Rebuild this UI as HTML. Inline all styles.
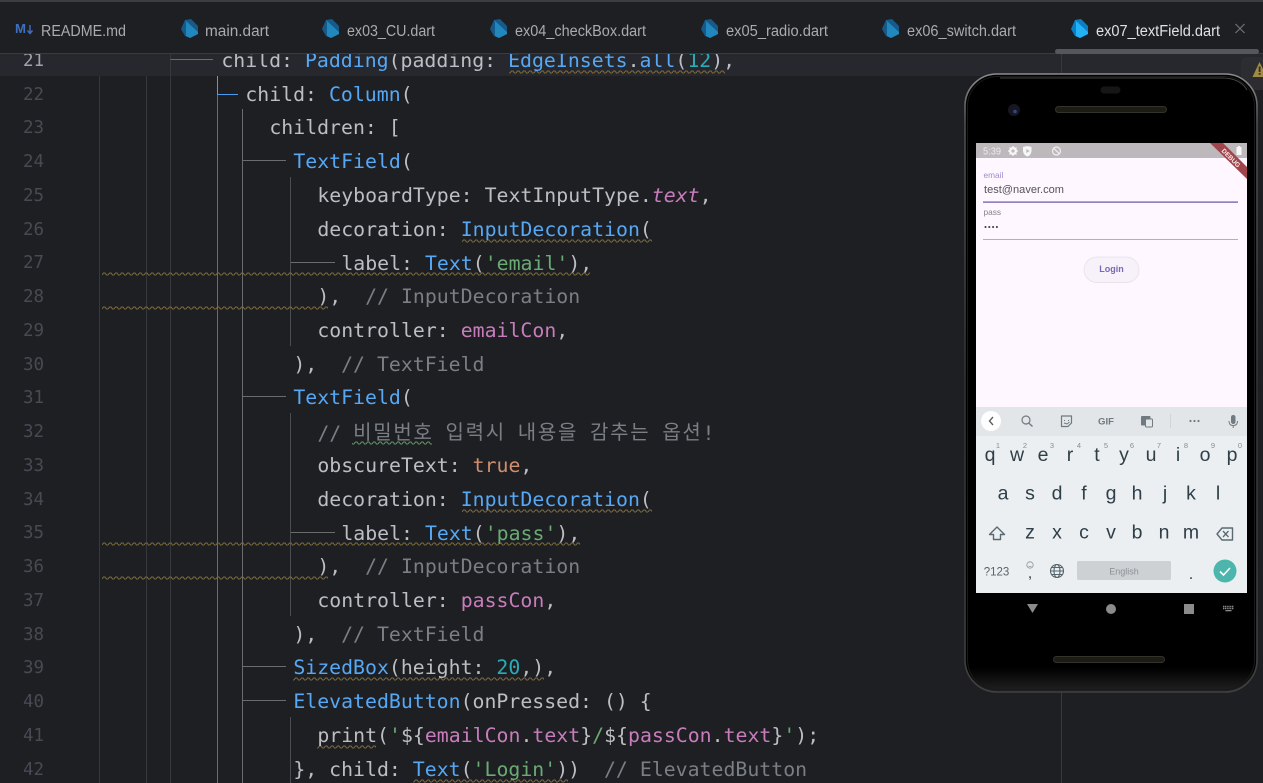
<!DOCTYPE html>
<html><head><meta charset="utf-8"><style>
html,body{margin:0;padding:0;width:1263px;height:783px;overflow:hidden;background:#1e1f23}
#wrap{position:relative;width:1263px;height:783px;overflow:hidden;background:#1e1f23}
svg{position:absolute;left:0;top:0}
.l{position:absolute;height:34px;line-height:34px;white-space:pre;margin-left:-.7px;font-family:"DejaVu Sans Mono","Liberation Mono","Noto Sans CJK KR",monospace;font-size:19.85px;color:#bcbec4;top:calc(43.8px + var(--n)*33.76px);z-index:3}
.g{position:absolute;left:23px;height:34px;line-height:34px;font-family:"DejaVu Sans Mono","Liberation Mono",monospace;font-size:17.5px;color:#464a52;top:calc(43.8px + var(--n)*33.76px);z-index:3}
.c{color:#56a8f5}.n{color:#2aacb8}.s{color:#6aab73}.p{color:#c77dbb}.k{color:#cf8e6d}.m{color:#7a7e85}
.i{font-style:italic}
.ko{font-family:"Noto Sans CJK KR","Liberation Sans",sans-serif;font-size:20px;letter-spacing:1.7px;position:relative;top:-1.5px}
#phone{filter:blur(.3px)}
</style></head><body><div id="wrap">

<div style="position:absolute;left:0;top:53px;width:1263px;height:23px;background:#26282e"></div>

<svg width="1263" height="783" style="z-index:1">
<defs><pattern id="w" width="6" height="4" patternUnits="userSpaceOnUse"><path d="M0 3 L1.5 1 L3 1 L4.5 3 L6 3" fill="none" stroke="#7d6c3e" stroke-width="1"/></pattern>
<pattern id="wg" width="6" height="4" patternUnits="userSpaceOnUse"><path d="M0 3 L1.5 1 L3 1 L4.5 3 L6 3" fill="none" stroke="#5f9a62" stroke-width="1"/></pattern></defs>
<g stroke="#36383d" stroke-width="1" fill="none">
<path d="M99.5 76V783M146.5 76V783M170.5 53V783M1061.5 53V783"/>
</g>
<g stroke="#6a6c70" stroke-width="1" fill="none">
<path d="M170.5 59.5H213"/>
<path d="M217.5 94V783M242.5 109V783"/>
<path d="M242.5 160.5H286M242.5 396.5H286M242.5 666.5H286M242.5 700.5H286"/>
<path d="M290.5 262.5H335M290.5 532.5H335"/>
</g>
<path d="M217.5 76V94.5H238" stroke="#4a9cf0" fill="none"/>
<path d="M290.5 177V346M290.5 413V616M290.5 717V783" stroke="#4a4c52" fill="none"/>
<g transform="translate(0,70)"><rect x="509" width="216" height="4" fill="url(#w)"/></g>
<g transform="translate(0,239)"><rect x="462" width="190" height="4" fill="url(#w)"/></g>
<g transform="translate(0,272)"><rect x="102" width="488" height="4" fill="url(#w)"/></g>
<g transform="translate(0,306)"><rect x="102" width="226" height="4" fill="url(#w)"/></g>
<g transform="translate(0,441)"><rect x="352" width="80" height="4" fill="url(#wg)"/></g>
<g transform="translate(0,509)"><rect x="462" width="190" height="4" fill="url(#w)"/></g>
<g transform="translate(0,542)"><rect x="102" width="478" height="4" fill="url(#w)"/></g>
<g transform="translate(0,576)"><rect x="102" width="226" height="4" fill="url(#w)"/></g>
<g transform="translate(0,677)"><rect x="293" width="251" height="4" fill="url(#w)"/></g>
<g transform="translate(0,745)"><rect x="317" width="59" height="4" fill="url(#w)"/></g>
<g transform="translate(0,779)"><rect x="413" width="155" height="4" fill="url(#w)"/></g>
</svg>

<div class="g" style="--n:0;color:#a1a3ab">21</div><div class="g" style="--n:1">22</div><div class="g" style="--n:2">23</div><div class="g" style="--n:3">24</div><div class="g" style="--n:4">25</div><div class="g" style="--n:5">26</div><div class="g" style="--n:6">27</div><div class="g" style="--n:7">28</div><div class="g" style="--n:8">29</div><div class="g" style="--n:9">30</div><div class="g" style="--n:10">31</div><div class="g" style="--n:11">32</div><div class="g" style="--n:12">33</div><div class="g" style="--n:13">34</div><div class="g" style="--n:14">35</div><div class="g" style="--n:15">36</div><div class="g" style="--n:16">37</div><div class="g" style="--n:17">38</div><div class="g" style="--n:18">39</div><div class="g" style="--n:19">40</div><div class="g" style="--n:20">41</div><div class="g" style="--n:21">42</div>

<div class="l" style="--n:0;left:222px">child: <span class="c">Padding</span>(padding: <span class="c">EdgeInsets</span>.<span class="c">all</span>(<span class="n">12</span>),</div>
<div class="l" style="--n:1;left:246px">child: <span class="c">Column</span>(</div>
<div class="l" style="--n:2;left:270px">children: [</div>
<div class="l" style="--n:3;left:294px"><span class="c">TextField</span>(</div>
<div class="l" style="--n:4;left:318px">keyboardType: TextInputType.<span class="p i">text</span>,</div>
<div class="l" style="--n:5;left:318px">decoration: <span class="c">InputDecoration</span>(</div>
<div class="l" style="--n:6;left:342px;margin-top:.6px">label: <span class="c">Text</span>(<span class="s">'email'</span>),</div>
<div class="l" style="--n:7;left:318px">),  <span class="m">// InputDecoration</span></div>
<div class="l" style="--n:8;left:318px">controller: <span class="p">emailCon</span>,</div>
<div class="l" style="--n:9;left:294px">),  <span class="m">// TextField</span></div>
<div class="l" style="--n:10;left:294px"><span class="c">TextField</span>(</div>
<div class="l m" style="--n:11;left:318px">// <span class="ko">비밀번호</span> <span class="ko">입력시</span> <span class="ko">내용을</span> <span class="ko">감추는</span> <span class="ko">옵션</span>!</div>
<div class="l" style="--n:12;left:318px">obscureText: <span class="k">true</span>,</div>
<div class="l" style="--n:13;left:318px">decoration: <span class="c">InputDecoration</span>(</div>
<div class="l" style="--n:14;left:342px;margin-top:.6px">label: <span class="c">Text</span>(<span class="s">'pass'</span>),</div>
<div class="l" style="--n:15;left:318px">),  <span class="m">// InputDecoration</span></div>
<div class="l" style="--n:16;left:318px">controller: <span class="p">passCon</span>,</div>
<div class="l" style="--n:17;left:294px">),  <span class="m">// TextField</span></div>
<div class="l" style="--n:18;left:294px"><span class="c">SizedBox</span>(height: <span class="n">20</span>,),</div>
<div class="l" style="--n:19;left:294px"><span class="c">ElevatedButton</span>(onPressed: () {</div>
<div class="l" style="--n:20;left:318px">print(<span class="s">'</span>${<span class="p">emailCon</span>.<span class="p">text</span>}<span class="s">/</span>${<span class="p">passCon</span>.<span class="p">text</span>}<span class="s">'</span>);</div>
<div class="l" style="--n:21;left:294px">}, child: <span class="c">Text</span>(<span class="s">'Login'</span>))  <span class="m">// ElevatedButton</span></div>

<svg width="1263" height="783" style="z-index:5" font-family="'Liberation Sans',sans-serif">
<defs>
<linearGradient id="fr" x1="0" y1="0" x2="0" y2="1"><stop offset="0" stop-color="#8e8e8e"/><stop offset=".08" stop-color="#4e4e4e"/><stop offset=".5" stop-color="#333"/><stop offset="1" stop-color="#404040"/></linearGradient>
<linearGradient id="bt" x1="0" y1="0" x2="0" y2="1"><stop offset="0" stop-color="#000"/><stop offset=".96" stop-color="#000"/><stop offset="1" stop-color="#222"/></linearGradient>
<symbol id="dd" viewBox="0 0 18 19"><polygon points="4,1 10,0 17,7 17,15 9,19 4,17 0,10" fill="#155a8a"/><polygon points="4,1 17,13 17,15 9,19 5,17 5,3" fill="#2187bd"/></symbol>
<symbol id="da" viewBox="0 0 18 19"><polygon points="4,1 10,0 17,7 17,15 9,19 4,17 0,10" fill="#0a7fc4"/><polygon points="4,1 17,13 17,15 9,19 5,17 5,3" fill="#23b2f6"/></symbol>
</defs>

<!-- tab bar -->
<rect x="0" y="0" width="1263" height="53" fill="#1e1f23"/>
<rect x="0" y="0" width="1263" height="2" fill="#3c3d41"/>
<rect x="0" y="53" width="1263" height="1" fill="#393b40"/>
<rect x="1055" y="49" width="204" height="5" rx="2.5" fill="#55575c"/>
<text x="15" y="33" font-size="12.5" font-weight="bold" fill="#3f6fbf" textLength="11" lengthAdjust="spacingAndGlyphs">M</text>
<path d="M30 25V33M27.5 30.5L30 33.5L32.5 30.5" stroke="#3f6fbf" stroke-width="1.4" fill="none"/>
<g font-size="15.5" fill="#a9abb1">
<text x="41" y="36" textLength="85" lengthAdjust="spacingAndGlyphs">README.md</text>
<text x="205" y="36" textLength="64" lengthAdjust="spacingAndGlyphs">main.dart</text>
<text x="347" y="36" textLength="88" lengthAdjust="spacingAndGlyphs">ex03_CU.dart</text>
<text x="515" y="36" textLength="131" lengthAdjust="spacingAndGlyphs">ex04_checkBox.dart</text>
<text x="726" y="36" textLength="102" lengthAdjust="spacingAndGlyphs">ex05_radio.dart</text>
<text x="907" y="36" textLength="109" lengthAdjust="spacingAndGlyphs">ex06_switch.dart</text>
<text x="1096" y="36" textLength="124" lengthAdjust="spacingAndGlyphs" fill="#dfe1e5">ex07_textField.dart</text>
</g>
<use href="#dd" x="181" y="19" width="18" height="19"/>
<use href="#dd" x="322" y="19" width="18" height="19"/>
<use href="#dd" x="490" y="19" width="18" height="19"/>
<use href="#dd" x="701" y="19" width="18" height="19"/>
<use href="#dd" x="882" y="19" width="18" height="19"/>
<use href="#da" x="1071" y="19" width="18" height="19"/>
<path d="M1235.5 24L1244.5 33M1244.5 24L1235.5 33" stroke="#6f737a" stroke-width="1.2"/>

<!-- right panel + warning -->
<path d="M1263 57H1246Q1241 57 1241 62V90H1263Z" fill="#2b2d30"/>
<path d="M1259.5 62L1267 77H1252.5Z" fill="#a08a44"/>
<rect x="1258.7" y="66.5" width="1.8" height="5.5" fill="#2b2d30"/><rect x="1258.7" y="73" width="1.8" height="1.8" fill="#2b2d30"/>

<g id="phone">
<!-- phone -->
<rect x="965" y="74" width="292" height="618" rx="32" fill="url(#bt)" stroke="url(#fr)" stroke-width="1.6"/>
<rect x="967.5" y="76.5" width="287" height="613" rx="30" fill="none" stroke="#191919" stroke-width="1"/>
<path d="M1000 78H1222Q1240 78 1247 90" stroke="#444" stroke-width="1" fill="none"/>
<rect x="1100.5" y="86.5" width="20" height="7" rx="3.5" fill="#161616"/>
<rect x="1055.5" y="106.5" width="111" height="6" rx="3" fill="#1c1b14" stroke="#33332c" stroke-width="1"/>
<circle cx="1014" cy="110" r="6" fill="#171722"/><circle cx="1015" cy="111.5" r="1.8" fill="#35448c"/>
<rect x="1053.5" y="656.5" width="111" height="6" rx="3" fill="#1c1b14" stroke="#33332c" stroke-width="1"/>

<!-- screen -->
<rect x="976" y="143" width="271" height="450" fill="#fef7ff"/>
<rect x="976" y="143" width="271" height="15" fill="#bdb8bc"/>
<text x="983" y="154.5" font-size="10.5" fill="#ecebed" textLength="18" lengthAdjust="spacingAndGlyphs">5:39</text>
<circle cx="1013" cy="151" r="2.8" fill="none" stroke="#f7f6f7" stroke-width="2.4"/>
<path d="M1013 146V156M1008 151H1018M1009.5 147.5L1016.5 154.5M1016.5 147.5L1009.5 154.5" stroke="#f7f6f7" stroke-width="1.2" stroke-dasharray="1.2 7.6"/>
<path d="M1023 147L1027.5 146L1031.5 147V151.5Q1030.5 155.5 1027.5 156.5Q1024 155.5 1023 151.5Z" fill="#f7f6f7"/>
<path d="M1026.3 149L1029.7 151L1026.3 153Z" fill="#bdb8bc"/>
<circle cx="1056.5" cy="151" r="4" fill="none" stroke="#f0eff0" stroke-width="1.2"/>
<path d="M1053.8 148.3L1059.2 153.7" stroke="#f0eff0" stroke-width="1.2"/>
<rect x="1236.5" y="147" width="5" height="8" fill="#f8f8f8"/><rect x="1238" y="146" width="2" height="1" fill="#f8f8f8"/>

<text x="983.5" y="178" font-size="8.3" fill="#a08cd2">email</text>
<text x="984" y="193" font-size="10.6" fill="#55525a" textLength="80" lengthAdjust="spacingAndGlyphs">test@naver.com</text>
<rect x="983" y="201.5" width="255" height="1.2" fill="#6750a4"/>
<text x="983.5" y="215" font-size="8.3" fill="#85808a">pass</text>
<g fill="#3b3840"><circle cx="985.5" cy="227" r="1.05"/><circle cx="989.3" cy="227" r="1.05"/><circle cx="993.1" cy="227" r="1.05"/><circle cx="996.9" cy="227" r="1.05"/></g>
<rect x="983" y="239" width="255" height="1" fill="#b5afb8"/>
<rect x="1084" y="257" width="55" height="25.5" rx="12.7" fill="#f7f2fa" stroke="#e4dfe7" stroke-width=".7"/>
<text x="1111.5" y="272" font-size="9" font-weight="bold" fill="#7a67b5" text-anchor="middle">Login</text>

<!-- debug banner -->
<polygon points="1210,143 1223,143 1247,167 1247,179" fill="#a0454b"/>
<text transform="translate(1231,158) rotate(45)" font-size="6.5" font-weight="bold" fill="#f6eeee" text-anchor="middle" y="2.2">DEBUG</text>

<!-- keyboard -->
<rect x="976" y="407" width="271" height="186" fill="#ebeff2"/>
<rect x="976" y="407" width="271" height="29" fill="#e2e6e8"/>
<circle cx="991" cy="421" r="10" fill="#fff"/>
<path d="M993 417L989.5 421L993 425" stroke="#5a6267" stroke-width="1.4" fill="none"/>
<circle cx="1026" cy="420" r="4" fill="none" stroke="#707a80" stroke-width="1.2"/><path d="M1029 423.2L1032.5 426.5" stroke="#707a80" stroke-width="1.4"/>
<path d="M1061.5 416H1071.5V423L1068 426.5H1061.5Z" fill="none" stroke="#707a80" stroke-width="1.2" stroke-linejoin="round"/>
<path d="M1064 420.5H1065M1068 420.5H1069M1064 423L1067 424L1069.5 422" stroke="#707a80" stroke-width="1" fill="none"/>
<text x="1098" y="424.5" font-size="9.5" font-weight="bold" fill="#707a80" textLength="16" lengthAdjust="spacingAndGlyphs">GIF</text>
<rect x="1141" y="416" width="9.5" height="9.5" rx="1" fill="#707a80"/><rect x="1145.5" y="419" width="7" height="8" rx="1" fill="#e2e6e8" stroke="#707a80"/>
<rect x="1170" y="414" width="1" height="14" fill="#d0d4d7"/>
<g fill="#707a80"><circle cx="1190.5" cy="421" r="1.1"/><circle cx="1194.5" cy="421" r="1.1"/><circle cx="1198.5" cy="421" r="1.1"/></g>
<rect x="1231" y="415" width="4.5" height="9" rx="2.2" fill="#707a80"/><path d="M1229 421Q1229 425.5 1233.2 425.5Q1237.5 425.5 1237.5 421M1233.2 425.5V428" fill="none" stroke="#707a80" stroke-width="1"/>

<g font-size="7.5" fill="#868d91" text-anchor="middle">
<text x="998" y="448">1</text><text x="1025" y="448">2</text><text x="1052" y="448">3</text><text x="1079" y="448">4</text><text x="1106" y="448">5</text><text x="1132" y="448">6</text><text x="1159" y="448">7</text><text x="1186" y="448">8</text><text x="1213" y="448">9</text><text x="1240" y="448">0</text>
</g>
<g font-size="19.5" fill="#2f3f47" text-anchor="middle">
<text x="990" y="461">q</text><text x="1017" y="461">w</text><text x="1043" y="461">e</text><text x="1070" y="461">r</text><text x="1097" y="461">t</text><text x="1124" y="461">y</text><text x="1151" y="461">u</text><text x="1178" y="461">i</text><text x="1205" y="461">o</text><text x="1232" y="461">p</text>
<text x="1003" y="499.5">a</text><text x="1030" y="499.5">s</text><text x="1057" y="499.5">d</text><text x="1084" y="499.5">f</text><text x="1111" y="499.5">g</text><text x="1137" y="499.5">h</text><text x="1165" y="499.5">j</text><text x="1191" y="499.5">k</text><text x="1218" y="499.5">l</text>
<text x="1030" y="538.5">z</text><text x="1057" y="538.5">x</text><text x="1084" y="538.5">c</text><text x="1111" y="538.5">v</text><text x="1137" y="538.5">b</text><text x="1164" y="538.5">n</text><text x="1191" y="538.5">m</text>
</g>
<path d="M997 527L1004.5 534.5H1000.5V539.5H993.5V534.5H989.5Z" fill="none" stroke="#5b6a72" stroke-width="1.4" stroke-linejoin="round"/>
<path d="M1222 528H1232.5V540H1222L1217 534Z" fill="none" stroke="#5b6a72" stroke-width="1.4" stroke-linejoin="round"/>
<path d="M1223 531L1228.5 537M1228.5 531L1223 537" stroke="#5b6a72" stroke-width="1.3"/>
<text x="996.5" y="575.5" font-size="11.5" fill="#55646c" text-anchor="middle">?123</text>
<circle cx="1030" cy="565" r="3.2" fill="none" stroke="#8a9297" stroke-width=".8"/>
<path d="M1028.5 566Q1030 567.5 1031.5 566" stroke="#8a9297" stroke-width=".6" fill="none"/>
<text x="1030" y="578" font-size="12" font-weight="bold" fill="#455a64" text-anchor="middle">,</text>
<g fill="none" stroke="#55646c" stroke-width="1.1"><circle cx="1057" cy="571" r="6.5"/><ellipse cx="1057" cy="571" rx="3" ry="6.5"/><path d="M1050.5 571H1063.5M1051.5 567.5H1062.5M1051.5 574.5H1062.5"/></g>
<rect x="1077" y="561" width="94" height="19" rx="1.5" fill="#cdd1d4"/>
<text x="1124" y="574.5" font-size="9" fill="#8b9195" text-anchor="middle">English</text>
<text x="1191" y="579" font-size="12" font-weight="bold" fill="#455a64" text-anchor="middle">.</text>
<circle cx="1225" cy="571" r="11.5" fill="#4db6ac"/>
<path d="M1220 571.5L1223.5 575L1230 568" stroke="#fff" stroke-width="1.6" fill="none"/>

<!-- nav -->
<polygon points="1027,604 1038,604 1032.5,613" fill="#8b8b8b"/>
<circle cx="1111" cy="609" r="5" fill="#8b8b8b"/>
<rect x="1184" y="604" width="10" height="10" fill="#8b8b8b"/>
<path d="M1223 606.5H1234M1223 608.5H1234" stroke="#8b8b8b" stroke-width="1.4" stroke-dasharray="1.2 .6"/><rect x="1225.5" y="610" width="6" height="1.3" fill="#8b8b8b"/>
</g>
</svg>
</div></body></html>
